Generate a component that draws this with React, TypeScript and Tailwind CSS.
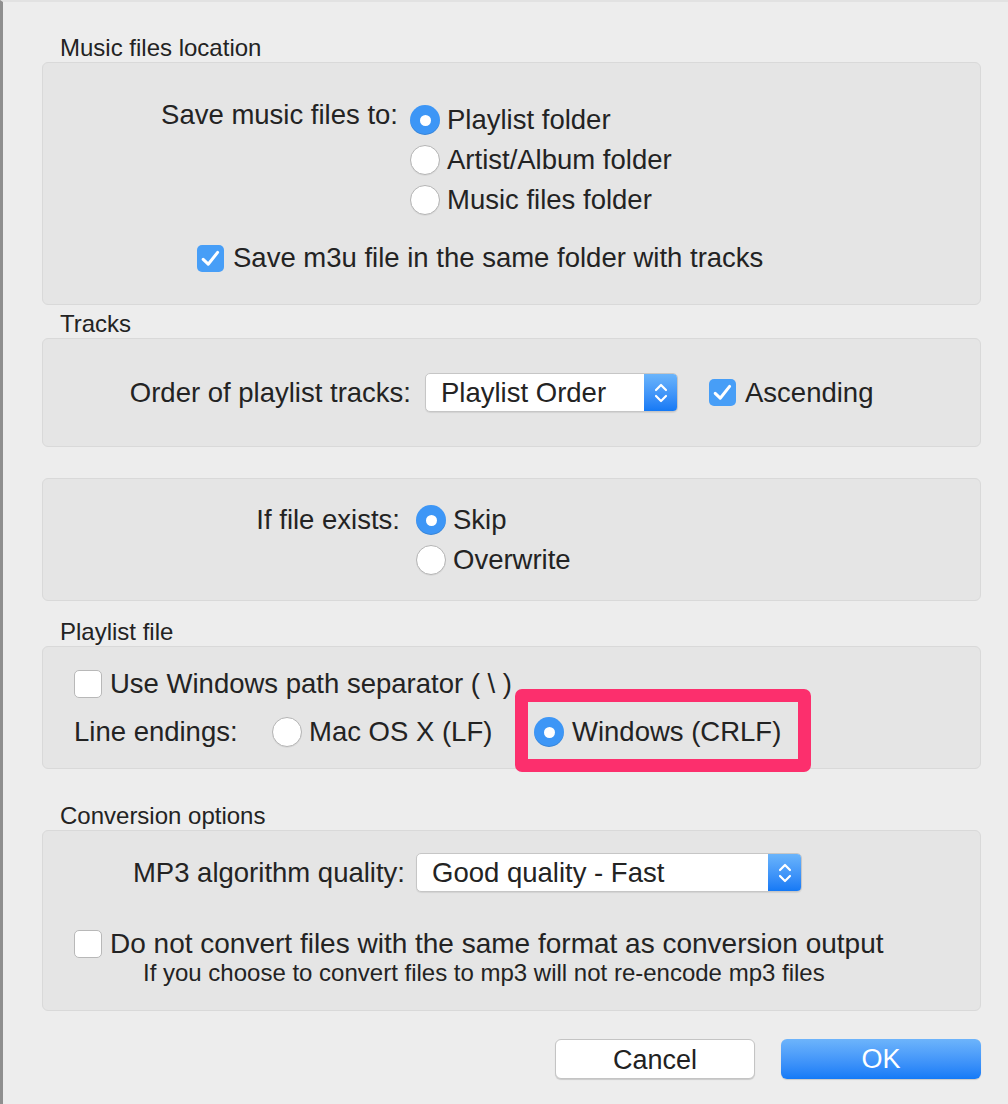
function Radio({ on }: { on?: boolean }) {
  return on ? (
    <span className="flex h-[30px] w-[30px] shrink-0 items-center justify-center rounded-full bg-[#3d96f6] shadow-[inset_0_-1px_0_rgba(0,0,0,0.12)]">
      <span className="h-[11px] w-[11px] rounded-full bg-white"></span>
    </span>
  ) : (
    <span className="h-[30px] w-[30px] shrink-0 rounded-full border border-[#b4b4b4] bg-white shadow-[0_1px_0_rgba(0,0,0,0.05)]"></span>
  );
}

function Check({ on }: { on?: boolean }) {
  return on ? (
    <span className="flex h-[27px] w-[27px] shrink-0 items-center justify-center rounded-[5px] bg-[#479ef7]">
      <svg width="21" height="19" viewBox="0 0 21 19" fill="none">
        <path d="M3.2 10.4 L8.2 15.2 L17.6 3.4" stroke="white" strokeWidth="3" strokeLinecap="round" strokeLinejoin="round" />
      </svg>
    </span>
  ) : (
    <span className="h-[28px] w-[28px] shrink-0 rounded-[5px] border border-[#b8b8b8] bg-white"></span>
  );
}

function Select({ text, w }: { text: string; w: string }) {
  return (
    <div className={`flex h-[39px] ${w} shrink-0 overflow-hidden rounded-[5px] border border-[#c6c6c6] bg-white shadow-[0_1px_1px_rgba(0,0,0,0.08)]`}>
      <span className="flex-1 pl-[15px] leading-[37px]">{text}</span>
      <span className="flex w-[33px] items-center justify-center bg-gradient-to-b from-[#6ab4fb] to-[#1479f5]">
        <svg width="16" height="24" viewBox="0 0 16 24" fill="none">
          <path d="M3 9 L8 4 L13 9" stroke="white" strokeWidth="2.2" strokeLinecap="round" strokeLinejoin="round" />
          <path d="M3 15 L8 20 L13 15" stroke="white" strokeWidth="2.2" strokeLinecap="round" strokeLinejoin="round" />
        </svg>
      </span>
    </div>
  );
}

function Option({ on, label }: { on?: boolean; label: string }) {
  return (
    <div className="flex h-[40px] items-center gap-[7px]">
      <Radio on={on} />
      <span>{label}</span>
    </div>
  );
}

export default function App() {
  const box = "mx-[42px] w-[939px] rounded-[6px] border border-[#d9d9d9] bg-[#e5e5e5]";
  const label = "pl-[60px] text-[24px] leading-[28px]";

  return (
    <div className="relative h-[1104px] w-[1008px] overflow-hidden border-l-[3px] border-t-[2px] border-l-[#8f8f8f] border-t-[#e2e2e2] bg-[#ededed] font-['Liberation_Sans',Arial,sans-serif] text-[27.5px] text-[#232323]">
      <div className="-ml-[3px] pt-[32px]">
        <div className={label}>Music files location</div>
        <div className={`${box} h-[243px] pt-[37px]`}>
          <div className="flex">
            <div className="w-[355px] text-right leading-[30px]">Save music files to:</div>
            <div className="ml-[12px] flex flex-col">
              <Option on label="Playlist folder" />
              <Option label="Artist/Album folder" />
              <Option label="Music files folder" />
            </div>
          </div>
          <div className="ml-[154px] mt-[18px] flex h-[40px] items-center gap-[9px]">
            <Check on />
            <span>Save m3u file in the same folder with tracks</span>
          </div>
        </div>

        <div className={`${label} mt-[5px]`}>Tracks</div>
        <div className={`${box} flex h-[109px] items-center`}>
          <div className="w-[368px] text-right">Order of playlist tracks:</div>
          <div className="ml-[14px]">
            <Select text="Playlist Order" w="w-[253px]" />
          </div>
          <div className="ml-[31px] flex items-center gap-[9px]">
            <Check on />
            <span>Ascending</span>
          </div>
        </div>

        <div className={`${box} mt-[31px] flex h-[123px] pt-[21px]`}>
          <div className="w-[357px] pt-[4px] text-right leading-[32px]">If file exists:</div>
          <div className="ml-[16px] flex flex-col">
            <Option on label="Skip" />
            <Option label="Overwrite" />
          </div>
        </div>

        <div className={`${label} mt-[17px]`}>Playlist file</div>
        <div className={`${box} relative h-[123px] pl-[31px] pt-[17px]`}>
          <div className="flex h-[40px] items-center gap-[8px]">
            <Check />
            <span>Use Windows path separator ( \ )</span>
          </div>
          <div className="mt-[8px] flex h-[40px] items-center">
            <span className="w-[198px]">Line endings:</span>
            <div className="w-[262px]">
              <Option label="Mac OS X (LF)" />
            </div>
            <div className="flex h-[40px] items-center gap-[8px]">
              <Radio on />
              <span>Windows (CRLF)</span>
            </div>
          </div>
          <div className="absolute left-[472px] top-[42px] h-[83px] w-[296px] rounded-[7px] border-[13px] border-[#fc2f6d]"></div>
        </div>

        <div className={`${label} mt-[33px]`}>Conversion options</div>
        <div className={`${box} h-[181px] pt-[21px]`}>
          <div className="flex items-center">
            <div className="w-[362px] text-right">MP3 algorithm quality:</div>
            <div className="ml-[11px]">
              <Select text="Good quality - Fast" w="w-[386px]" />
            </div>
          </div>
          <div className="ml-[31px] mt-[36px] flex h-[30px] items-center gap-[8px]">
            <Check />
            <span className="text-[28px]">Do not convert files with the same format as conversion output</span>
          </div>
          <div className="pl-[100px] text-[24px] leading-[28px]">If you choose to convert files to mp3 will not re-encode mp3 files</div>
        </div>

        <div className="mr-[27px] mt-[28px] flex justify-end gap-[26px]">
          <button className="h-[40px] w-[200px] rounded-[6px] border border-[#c4c4c4] bg-white text-[27px] text-[#222] shadow-[0_1px_1px_rgba(0,0,0,0.15)]">Cancel</button>
          <button className="h-[40px] w-[200px] rounded-[6px] bg-gradient-to-b from-[#6db4fb] to-[#137af7] text-[27px] text-white shadow-[0_1px_1px_rgba(0,0,0,0.15)]">OK</button>
        </div>
      </div>
    </div>
  );
}
